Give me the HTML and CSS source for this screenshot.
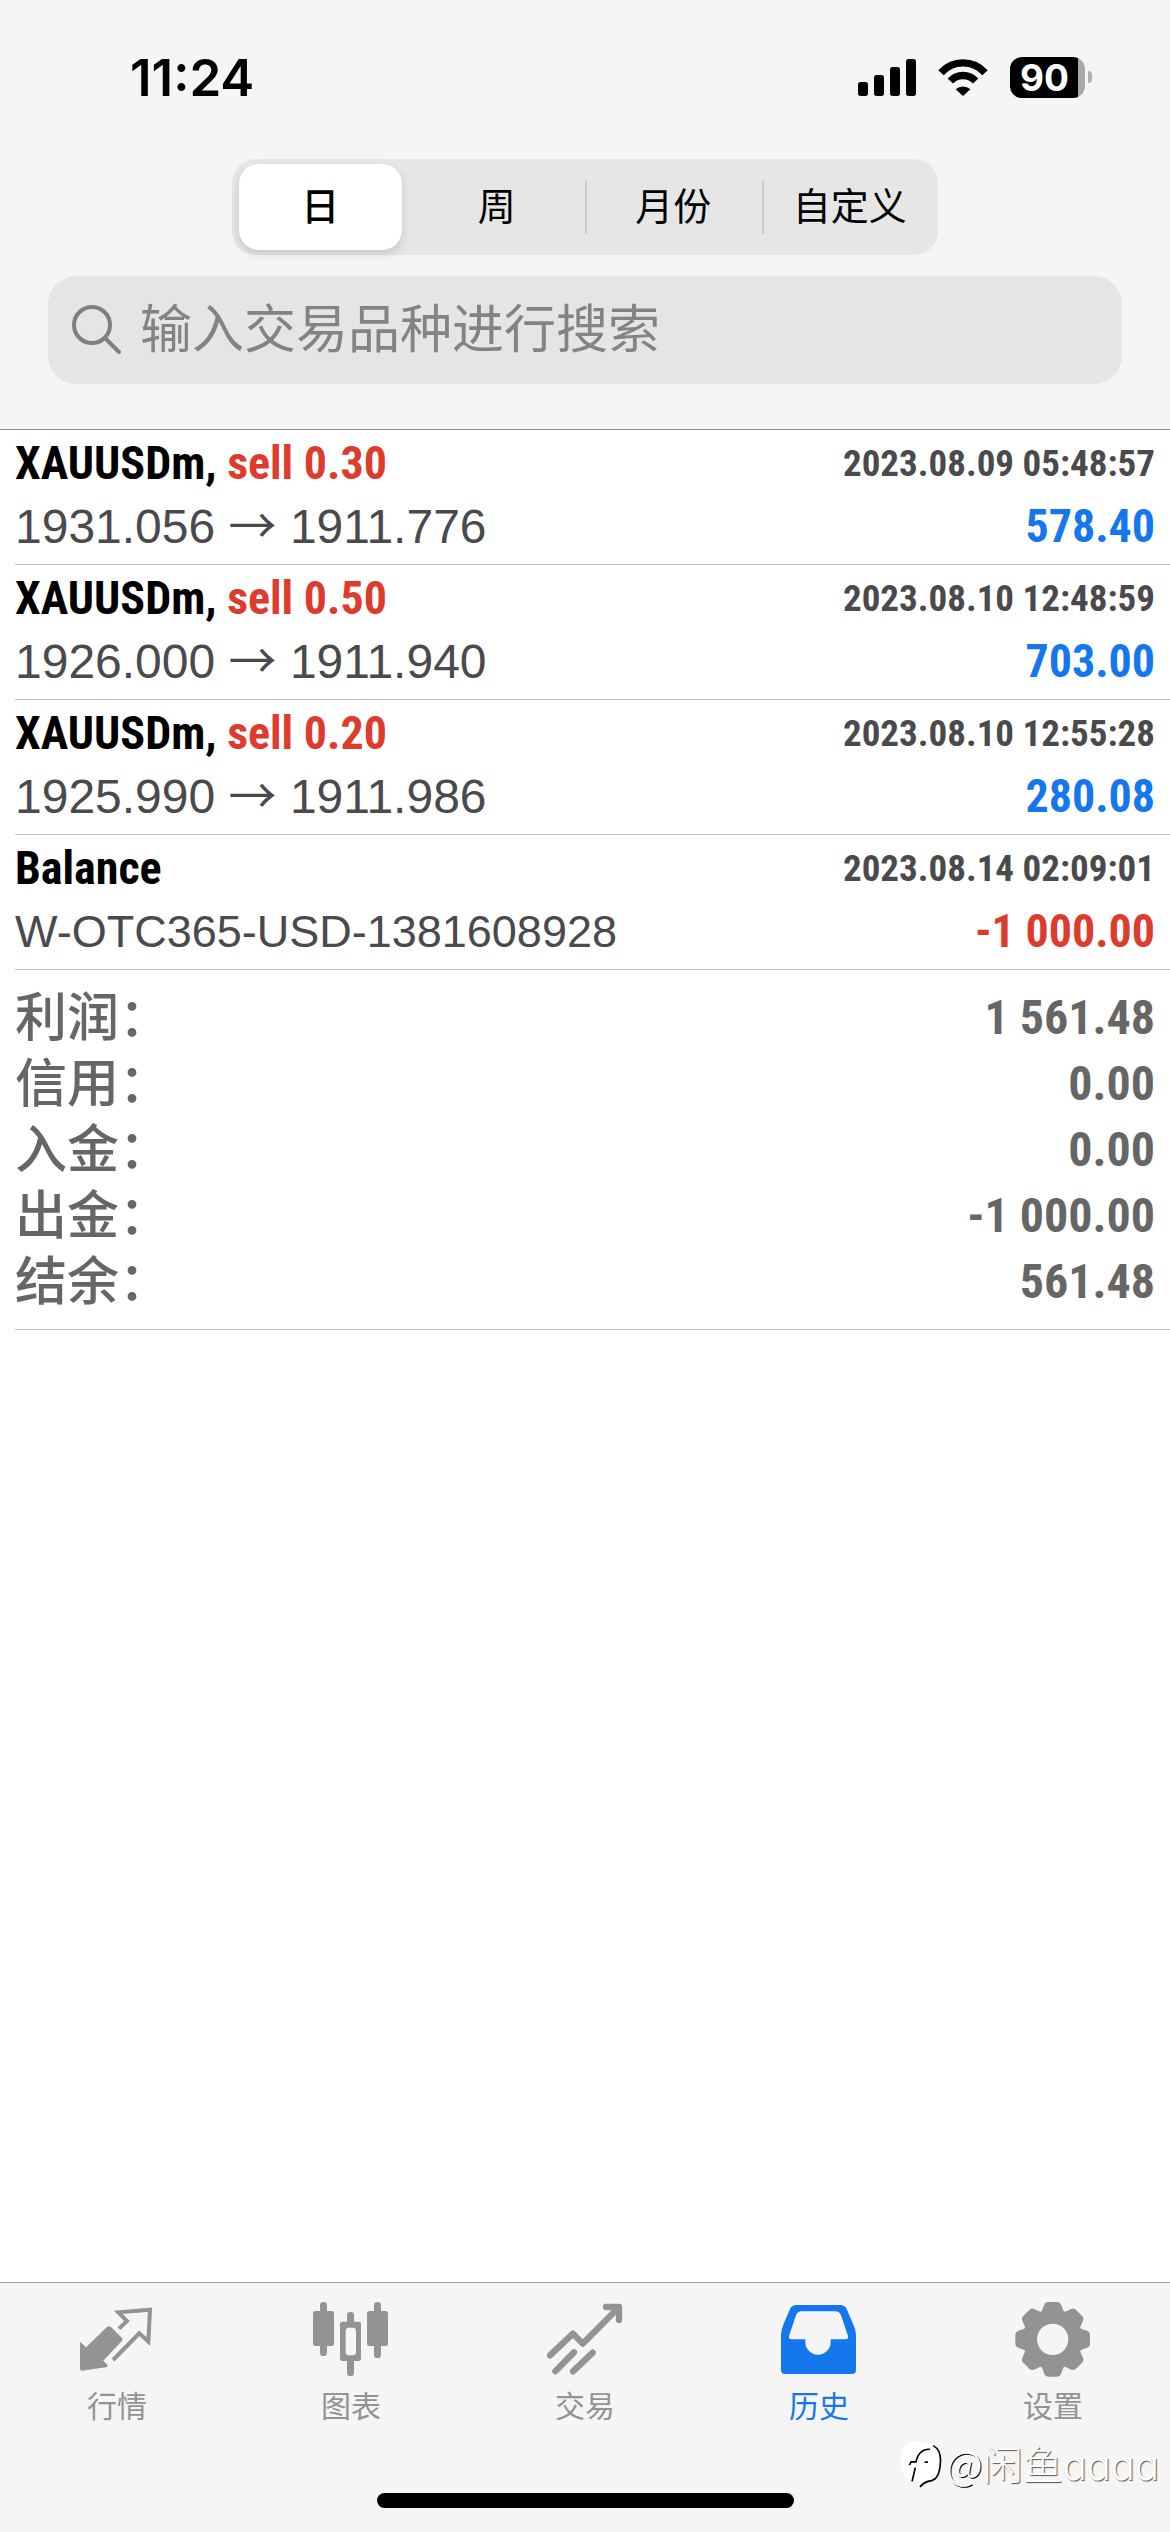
FILE: index.html
```html
<!DOCTYPE html>
<html lang="zh-CN">
<head>
  <meta charset="UTF-8">
  <title>历史</title>
  <meta name="viewport" content="width=device-width, initial-scale=1">
  <link rel="stylesheet" href="styles.css">
</head>
<body>
  <header class="header">
    <div class="status">
      <span class="time">11:24</span>
      <div class="status-icons">
        <svg class="signal" viewBox="0 0 174 111" aria-hidden="true">
          <rect x="0" y="69" width="30" height="42" rx="8"/>
          <rect x="48" y="48" width="30" height="63" rx="8"/>
          <rect x="96" y="24" width="30" height="87" rx="8"/>
          <rect x="144" y="0" width="30" height="111" rx="8"/>
        </svg>
        <svg class="wifi" viewBox="0 0 150 111" aria-hidden="true">
          <path d="M9 41A89 89 0 0 1 141 41M37 66A52 52 0 0 1 113 66" fill="none" stroke="#000" stroke-width="22"/>
          <path d="M75 111L53 91A32 32 0 0 1 97 91Z"/>
        </svg>
        <span class="battery">90</span>
      </div>
    </div>

    <div class="segments">
      <button class="segment active">日</button>
      <button class="segment">周</button>
      <button class="segment divided">月份</button>
      <button class="segment divided">自定义</button>
    </div>

    <label class="search">
      <svg class="search-icon" viewBox="0 0 50 50" aria-hidden="true">
        <circle cx="20" cy="20" r="18"/>
        <path d="M33 33L47 47"/>
      </svg>
      <input type="text" placeholder="输入交易品种进行搜索" aria-label="输入交易品种进行搜索">
    </label>
  </header>

  <main class="history">
    <ul class="deals">
      <li class="deal">
        <div class="row">
          <span class="symbol">XAUUSDm, <span class="sell">sell 0.30</span></span>
          <span class="date">2023.08.09 05:48:57</span>
        </div>
        <div class="row">
          <span class="price">1931.056 <span class="arrow">→</span> 1911.776</span>
          <span class="profit">578.40</span>
        </div>
      </li>
      <li class="deal">
        <div class="row">
          <span class="symbol">XAUUSDm, <span class="sell">sell 0.50</span></span>
          <span class="date">2023.08.10 12:48:59</span>
        </div>
        <div class="row">
          <span class="price">1926.000 <span class="arrow">→</span> 1911.940</span>
          <span class="profit">703.00</span>
        </div>
      </li>
      <li class="deal">
        <div class="row">
          <span class="symbol">XAUUSDm, <span class="sell">sell 0.20</span></span>
          <span class="date">2023.08.10 12:55:28</span>
        </div>
        <div class="row">
          <span class="price">1925.990 <span class="arrow">→</span> 1911.986</span>
          <span class="profit">280.08</span>
        </div>
      </li>
      <li class="deal">
        <div class="row">
          <span class="symbol">Balance</span>
          <span class="date">2023.08.14 02:09:01</span>
        </div>
        <div class="row">
          <span class="comment">W-OTC365-USD-1381608928</span>
          <span class="profit loss">-1 000.00</span>
        </div>
      </li>
    </ul>

    <dl class="summary">
      <div class="total"><dt>利润：</dt><dd>1 561.48</dd></div>
      <div class="total"><dt>信用：</dt><dd>0.00</dd></div>
      <div class="total"><dt>入金：</dt><dd>0.00</dd></div>
      <div class="total"><dt>出金：</dt><dd>-1 000.00</dd></div>
      <div class="total"><dt>结余：</dt><dd>561.48</dd></div>
    </dl>
  </main>

  <footer class="footer">
    <nav class="tabs">
      <a class="tab" href="#quotes">
        <svg viewBox="0 0 228 228" aria-hidden="true">
          <path d="M3 122L21 139L84 78Q90 73 96 78L129 111Q132 115 129 119L73 179L85 191V198L9 209Q3 209 3 203Z"/>
          <path d="M120 83L144 60L118 34L213 26L208 122L181 97L102 177" fill="none" stroke="currentColor" stroke-width="12"/>
        </svg>
        行情
      </a>
      <a class="tab" href="#charts">
        <svg viewBox="0 0 228 228" aria-hidden="true">
          <rect x="21" y="3" width="21" height="162" rx="10"/>
          <rect x="0" y="30" width="63" height="105" rx="7"/>
          <rect x="183" y="3" width="21" height="168" rx="10"/>
          <rect x="162" y="30" width="63" height="105" rx="7"/>
          <rect x="102" y="33" width="21" height="192" rx="10"/>
          <rect x="81" y="62" width="63" height="118" rx="7"/>
          <rect class="hole" x="98" y="80" width="31" height="83" rx="10"/>
        </svg>
        图表
      </a>
      <a class="tab" href="#trade">
        <svg class="lines" viewBox="0 0 228 228" aria-hidden="true">
          <path d="M9 163L78 98L107 128L214 20"/>
          <path d="M177 18H216V57"/>
          <path d="M25 211L81 154M78 211L137 155"/>
        </svg>
        交易
      </a>
      <a class="tab current" href="#history" aria-current="page">
        <svg viewBox="0 0 228 228" aria-hidden="true">
          <path d="M0 100Q1 84 10 64L26 26Q32 12 46 12H178Q192 12 198 26L214 64Q224 84 225 100V207Q225 219 213 219H12Q0 219 0 207Z"/>
          <path class="hole" d="M61 31H163Q175 31 180 43L201 105Q203 115 194 115H149V123A38 38 0 0 1 73 123V115H31Q22 115 24 105L45 43Q50 31 61 31Z"/>
        </svg>
        历史
      </a>
      <a class="tab" href="#settings">
        <svg viewBox="0 0 228 228" aria-hidden="true">
          <defs>
            <path id="tooth" d="M72 40Q82 32 86 16Q90 3 99 3H127Q136 3 140 16Q144 32 154 40Z"/>
          </defs>
          <circle cx="113" cy="115" r="86"/>
          <use href="#tooth"/>
          <use href="#tooth" transform="rotate(45 113 115)"/>
          <use href="#tooth" transform="rotate(90 113 115)"/>
          <use href="#tooth" transform="rotate(135 113 115)"/>
          <use href="#tooth" transform="rotate(180 113 115)"/>
          <use href="#tooth" transform="rotate(225 113 115)"/>
          <use href="#tooth" transform="rotate(270 113 115)"/>
          <use href="#tooth" transform="rotate(315 113 115)"/>
          <circle class="hole" cx="113" cy="115" r="47"/>
        </svg>
        设置
      </a>
    </nav>
    <div class="home-bar"></div>
    <div class="watermark">
      <svg viewBox="0 0 126 142" aria-hidden="true">
        <path d="M40 2Q112 -4 120 36Q126 108 92 120L60 139L66 120Q4 126 3 70Q0 6 40 2Z" fill="#fff"/>
        <path d="M100 14Q122 26 122 58Q121 100 106 114Q96 121 84 122Q70 126 60 139" fill="none" stroke="#000" stroke-width="5"/>
        <path d="M36 122L46 80M28 73L33 63H48Q56 24 90 25M74 64H84" fill="none" stroke="#000" stroke-width="5"/>
      </svg>
      <span><span class="at">@</span>闲鱼<span class="user">aaaa</span></span>
    </div>
  </footer>
</body>
</html>
```
FILE: styles.css
```css
:root {
  --bar: #f5f5f5;
  --line: #c0c0c2;
  --blue: #1577ee;
  --red: #dd3b2e;
  --gray: #939393;
  --dark: #4a4a4c;
  --total: #666;
  --sans: "Liberation Sans", "Noto Sans CJK SC", sans-serif;
  --narrow: "Roboto Condensed", "Liberation Sans", sans-serif;
}

* {
  box-sizing: border-box;
}

body {
  margin: 0;
  min-height: 100vh;
  display: flex;
  flex-direction: column;
  background-color: #fff;
  font-family: var(--sans);
}

.header {
  background-color: var(--bar);
  border-bottom: 1px solid #8a8a8c;
  padding-bottom: 45px;
}

/* status bar */
.status {
  display: flex;
  align-items: center;
  justify-content: space-between;
  height: 159px;
  padding: 0 85px 4px 130px;
}

.time {
  font: 600 51px/60px Inter, sans-serif;
}

.status-icons {
  display: flex;
  align-items: center;
  gap: 22px;
}

.signal {
  width: 58px;
  height: 37px;
}

.wifi {
  width: 50px;
  height: 37px;
}

.battery {
  position: relative;
  width: 75px;
  height: 41px;
  padding-right: 6px;
  border-radius: 12px;
  background: linear-gradient(to right, #000 68px, #a9a9a9 68px);
  color: #fff;
  font: 700 37px/41px Inter, sans-serif;
  text-align: center;
}

.battery::after {
  content: "";
  position: absolute;
  top: 14px;
  right: -7px;
  width: 4px;
  height: 12px;
  border-radius: 0 6px 6px 0;
  background-color: #b0b0b0;
}

/* period switch */
.segments {
  display: grid;
  grid-template-columns: repeat(4, 1fr);
  max-width: 706px;
  height: 96px;
  margin: 0 auto 21px;
  border-radius: 24px;
  background-color: #e6e6e6;
}

.segment {
  display: flex;
  align-items: center;
  justify-content: center;
  padding: 0;
  border: none;
  background: none;
  color: #000;
  font: 400 38px/56px var(--sans);
  white-space: nowrap;
  cursor: pointer;
}

.segment.active {
  margin: 5px 7px;
  border-radius: 20px;
  background-color: #fff;
  box-shadow: 0 4px 10px rgba(0, 0, 0, 0.14);
  font-weight: 500;
}

.segment.divided {
  background: linear-gradient(#cdcdcf, #cdcdcf) left center / 2px 54px no-repeat;
}

/* search */
.search {
  display: flex;
  align-items: center;
  gap: 18px;
  height: 108px;
  margin: 0 48px;
  padding: 0 24px;
  border-radius: 28px;
  background-color: #e5e5e7;
}

.search-icon {
  flex: none;
  width: 50px;
  height: 50px;
  fill: none;
  stroke: #7f7f82;
  stroke-width: 4;
  stroke-linecap: round;
}

.search input {
  flex: 1;
  min-width: 0;
  padding: 0;
  border: none;
  outline: none;
  background: none;
  color: #000;
  font: 400 52px/76px var(--sans);
}

.search input::placeholder {
  color: #838386;
  opacity: 1;
}

/* deals */
.history {
  flex: 1;
  padding-left: 15px;
}

.deals,
.summary {
  margin: 0;
  padding: 0;
  list-style: none;
}

.deal {
  height: 135px;
  padding: 2px 15px 0 0;
  border-bottom: 1px solid var(--line);
}

.row {
  display: flex;
  justify-content: space-between;
  height: 63px;
  line-height: 63px;
  white-space: nowrap;
}

.symbol,
.date,
.profit,
.total dd {
  font-family: var(--narrow);
  font-weight: 700;
}

.symbol {
  font-size: 46px;
  color: #000;
}

.sell {
  color: var(--red);
}

.date {
  font-size: 37px;
  color: var(--dark);
}

.price {
  font-size: 48px;
  color: var(--dark);
}

.arrow {
  font-family: "Noto Sans CJK SC", sans-serif;
  line-height: 1;
}

.comment {
  font-size: 45px;
  color: var(--dark);
}

.profit {
  font-size: 46px;
  color: var(--blue);
}

.loss {
  color: var(--red);
}

/* totals */
.summary {
  padding: 15px 15px 14px 0;
  border-bottom: 1px solid var(--line);
}

.total {
  display: flex;
  justify-content: space-between;
  height: 66px;
  color: var(--total);
  font-size: 52px;
  line-height: 66px;
}

.total dt {
  font-weight: 500;
}

.total dd {
  margin: 0;
  font-size: 48px;
}

/* tab bar */
.footer {
  position: relative;
  background-color: var(--bar);
  border-top: 1px solid #a0a0a2;
  padding: 18px 0 24px;
}

.tabs {
  display: grid;
  grid-template-columns: repeat(5, 1fr);
}

.tab {
  display: flex;
  flex-direction: column;
  align-items: center;
  gap: 8px;
  color: var(--gray);
  font: 400 30px/44px var(--sans);
  text-decoration: none;
}

.tab svg {
  width: 76px;
  height: 76px;
  fill: currentColor;
}

.tab .hole {
  fill: var(--bar);
}

.tab .lines {
  fill: none;
  stroke: currentColor;
  stroke-width: 19;
  stroke-linecap: round;
  stroke-linejoin: round;
}

.tab.current {
  color: var(--blue);
}

.home-bar {
  width: 417px;
  height: 15px;
  margin: 64px auto 0;
  border-radius: 8px;
  background-color: #000;
}

.watermark {
  position: absolute;
  right: 11px;
  bottom: 38px;
  display: flex;
  align-items: center;
  gap: 4px;
  color: #fff;
  font: 300 40px/56px "Noto Sans CJK SC", sans-serif;
  text-shadow: 1px 1px 1px #555;
}

.watermark svg {
  width: 42px;
  height: 47px;
}

.at {
  text-shadow: 1px 1px 0 #000;
}

.user {
  font-family: Inter, sans-serif;
  font-feature-settings: "cv11";
}
```
